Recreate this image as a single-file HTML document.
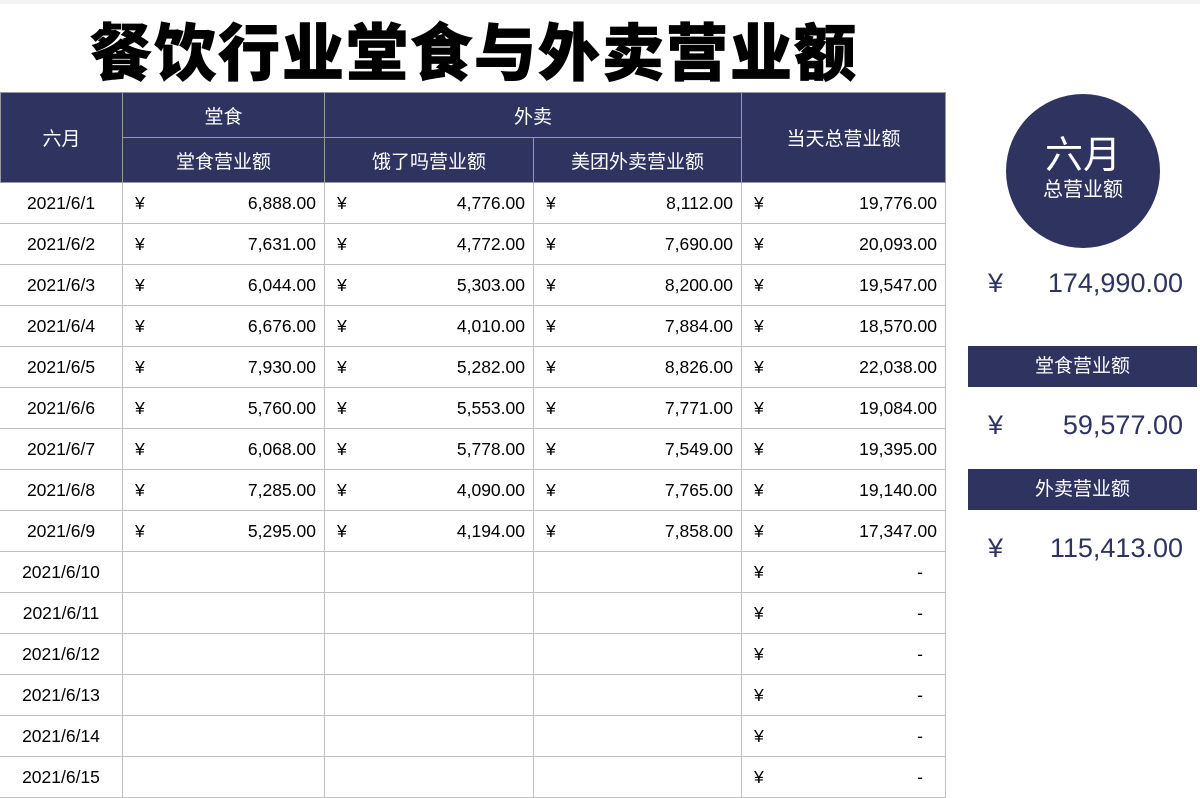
<!DOCTYPE html>
<html><head><meta charset="utf-8"><style>
*{margin:0;padding:0;box-sizing:border-box}
body{width:1200px;height:790px;background:#fff;position:relative;overflow:hidden;font-family:"Liberation Sans","Noto Sans CJK SC",sans-serif;color:#000}
.top{position:absolute;left:0;top:0;width:1200px;height:4px;background:#f2f2f2}
.title{position:absolute;left:90px;top:6px;font-size:62px;font-weight:900;letter-spacing:2px;line-height:84px;font-family:"Noto Sans CJK SC",sans-serif;-webkit-text-stroke:0.8px #000}
.h{position:absolute;background:#2e3360;color:#fff;font-size:19px;display:flex;align-items:center;justify-content:center;border:1px solid #9a9a9a}
.c{position:absolute;height:41px;border-right:1px solid #c0c0c0;border-bottom:1px solid #c0c0c0;font-size:17.5px;line-height:40px}
.y{position:absolute;left:12px}
.v{position:absolute;right:8px}
.circle{position:absolute;left:1006px;top:94px;width:154px;height:154px;border-radius:50%;background:#2e3360;color:#fff;text-align:center}
.bar{position:absolute;left:968px;width:229px;height:41px;background:#2e3360;color:#fff;font-size:19px;text-align:center;line-height:41px}
.big{position:absolute;left:968px;width:215px;color:#2e3360;font-size:27px}
.big span{position:absolute;left:20px}
.big b{font-weight:normal;position:absolute;right:0}
</style></head><body>
<div class="top"></div>
<div class="title">餐饮行业堂食与外卖营业额</div>
<div class="h" style="left:0;top:92px;width:123px;height:91px">六月</div>
<div class="h" style="left:122px;top:92px;width:203px;height:46px">堂食</div>
<div class="h" style="left:324px;top:92px;width:418px;height:46px">外卖</div>
<div class="h" style="left:741px;top:92px;width:205px;height:91px">当天总营业额</div>
<div class="h" style="left:122px;top:137px;width:203px;height:46px">堂食营业额</div>
<div class="h" style="left:324px;top:137px;width:210px;height:46px">饿了吗营业额</div>
<div class="h" style="left:533px;top:137px;width:209px;height:46px">美团外卖营业额</div>
<div id="rows"></div>
<div class="circle"><div style="font-size:38px;line-height:42px;margin-top:41px">六月</div><div style="font-size:20px;line-height:26px">总营业额</div></div>
<div class="big" style="top:268px"><span>¥</span><b>174,990.00</b></div>
<div class="bar" style="top:346px">堂食营业额</div>
<div class="big" style="top:410px"><span>¥</span><b>59,577.00</b></div>
<div class="bar" style="top:469px">外卖营业额</div>
<div class="big" style="top:533px"><span>¥</span><b>115,413.00</b></div>
<script>
var d=[["6,888.00","4,776.00","8,112.00","19,776.00"],["7,631.00","4,772.00","7,690.00","20,093.00"],["6,044.00","5,303.00","8,200.00","19,547.00"],["6,676.00","4,010.00","7,884.00","18,570.00"],["7,930.00","5,282.00","8,826.00","22,038.00"],["5,760.00","5,553.00","7,771.00","19,084.00"],["6,068.00","5,778.00","7,549.00","19,395.00"],["7,285.00","4,090.00","7,765.00","19,140.00"],["5,295.00","4,194.00","7,858.00","17,347.00"]];
var cols=[[0,123],[123,202],[325,209],[534,208],[742,204]];var h="";
for(var i=0;i<15;i++){var t=183+i*41;
h+='<div class="c" style="left:0;top:'+t+'px;width:123px;text-align:center">2021/6/'+(i+1)+'</div>';
for(var j=1;j<5;j++){var x=cols[j],inner="";
if(i<9)inner='<span class="y">¥</span><span class="v">'+d[i][j-1]+'</span>';
else if(j==4)inner='<span class="y">¥</span><span class="v" style="right:22px">-</span>';
h+='<div class="c" style="left:'+x[0]+'px;top:'+t+'px;width:'+x[1]+'px">'+inner+'</div>';}}
document.getElementById("rows").innerHTML=h;
</script>
</body></html>
